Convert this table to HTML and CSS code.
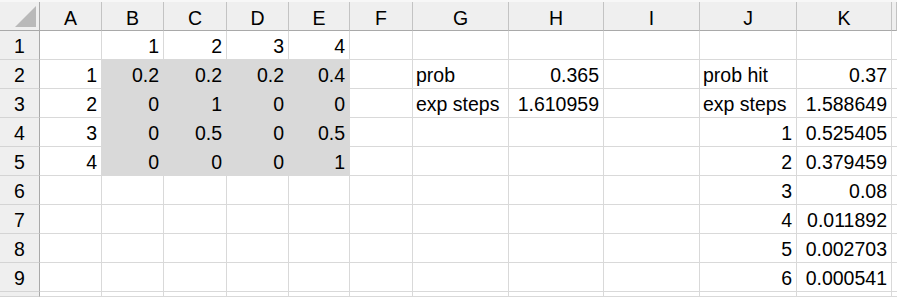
FILE: index.html
```html
<!DOCTYPE html>
<html>
<head>
<meta charset="utf-8">
<link rel="stylesheet" href="styles.css">
</head>
<body>
<div class="sheet">
  <div class="corner"><svg width="39" height="28" viewBox="0 0 39 28"><polygon points="15,25 36,25 36,4" fill="#b9b9b9"/></svg></div>
  <div class="h">A</div><div class="h">B</div><div class="h">C</div><div class="h">D</div><div class="h">E</div><div class="h">F</div><div class="h">G</div><div class="h">H</div><div class="h">I</div><div class="h">J</div><div class="h">K</div><div class="h"></div>

  <div class="r">1</div>
  <div class="c"></div><div class="c n">1</div><div class="c n">2</div><div class="c n">3</div><div class="c n">4</div><div class="c"></div><div class="c"></div><div class="c"></div><div class="c"></div><div class="c"></div><div class="c"></div><div class="c"></div>

  <div class="r">2</div>
  <div class="c n">1</div><div class="c n s">0.2</div><div class="c n s">0.2</div><div class="c n s">0.2</div><div class="c n s">0.4</div><div class="c"></div><div class="c t">prob</div><div class="c n">0.365</div><div class="c"></div><div class="c t">prob hit</div><div class="c n">0.37</div><div class="c"></div>

  <div class="r">3</div>
  <div class="c n">2</div><div class="c n s">0</div><div class="c n s">1</div><div class="c n s">0</div><div class="c n s">0</div><div class="c"></div><div class="c t">exp steps</div><div class="c n">1.610959</div><div class="c"></div><div class="c t">exp steps</div><div class="c n">1.588649</div><div class="c"></div>

  <div class="r">4</div>
  <div class="c n">3</div><div class="c n s">0</div><div class="c n s">0.5</div><div class="c n s">0</div><div class="c n s">0.5</div><div class="c"></div><div class="c"></div><div class="c"></div><div class="c"></div><div class="c n">1</div><div class="c n">0.525405</div><div class="c"></div>

  <div class="r">5</div>
  <div class="c n">4</div><div class="c n s">0</div><div class="c n s">0</div><div class="c n s">0</div><div class="c n s">1</div><div class="c"></div><div class="c"></div><div class="c"></div><div class="c"></div><div class="c n">2</div><div class="c n">0.379459</div><div class="c"></div>

  <div class="r">6</div>
  <div class="c"></div><div class="c"></div><div class="c"></div><div class="c"></div><div class="c"></div><div class="c"></div><div class="c"></div><div class="c"></div><div class="c"></div><div class="c n">3</div><div class="c n">0.08</div><div class="c"></div>

  <div class="r">7</div>
  <div class="c"></div><div class="c"></div><div class="c"></div><div class="c"></div><div class="c"></div><div class="c"></div><div class="c"></div><div class="c"></div><div class="c"></div><div class="c n">4</div><div class="c n">0.011892</div><div class="c"></div>

  <div class="r">8</div>
  <div class="c"></div><div class="c"></div><div class="c"></div><div class="c"></div><div class="c"></div><div class="c"></div><div class="c"></div><div class="c"></div><div class="c"></div><div class="c n">5</div><div class="c n">0.002703</div><div class="c"></div>

  <div class="r">9</div>
  <div class="c"></div><div class="c"></div><div class="c"></div><div class="c"></div><div class="c"></div><div class="c"></div><div class="c"></div><div class="c"></div><div class="c"></div><div class="c n">6</div><div class="c n">0.000541</div><div class="c"></div>

  <div class="r"></div>
  <div class="c"></div><div class="c"></div><div class="c"></div><div class="c"></div><div class="c"></div><div class="c"></div><div class="c"></div><div class="c"></div><div class="c"></div><div class="c"></div><div class="c"></div><div class="c"></div>
</div>
</body>
</html>
```

FILE: styles.css
```css
html, body {
  margin: 0;
  padding: 0;
  background: #ffffff;
  overflow: hidden;
}
body {
  padding-top: 2px;
  background: linear-gradient(#f7f7f7 0, #f7f7f7 2px, #ffffff 2px);
  font-family: "Liberation Sans", Arial, sans-serif;
  font-size: 19.5px;
  color: #000;
}
.sheet {
  display: grid;
  grid-template-columns: 40px 62px 62px 63px 62px 61px 63px 96px 95px 96px 97px 95px 5px;
  grid-template-rows: repeat(10, 29px) 5px;
  width: 897px;
  height: 295px;
  overflow: hidden;
}
.sheet > div {
  box-sizing: border-box;
  line-height: 22px;
  white-space: nowrap;
  overflow: hidden;
}
.corner {
  background: #efefef;
  border-right: 1px solid #a9a9a9;
  border-bottom: 1px solid #a9a9a9;
  display: flex;
}
.corner svg { display: block; }
.h {
  background: #efefef;
  border-right: 1px solid #c3c3c3;
  border-bottom: 1px solid #a9a9a9;
  display: flex;
  align-items: flex-end;
  justify-content: center;
  padding-bottom: 1px;
}
.r {
  background: #efefef;
  border-right: 1px solid #a9a9a9;
  border-bottom: 1px solid #d4d4d4;
  display: flex;
  align-items: flex-end;
  justify-content: center;
  padding-bottom: 2px;
}
.c {
  background: #ffffff;
  border-right: 1px solid #d9d9d9;
  border-bottom: 1px solid #d9d9d9;
  display: flex;
  align-items: flex-end;
  padding: 0 4px 2px 3px;
}
.n { justify-content: flex-end; }
.t { justify-content: flex-start; }
.s {
  background: #d9d9d9;
  border-color: #d9d9d9;
}
```
